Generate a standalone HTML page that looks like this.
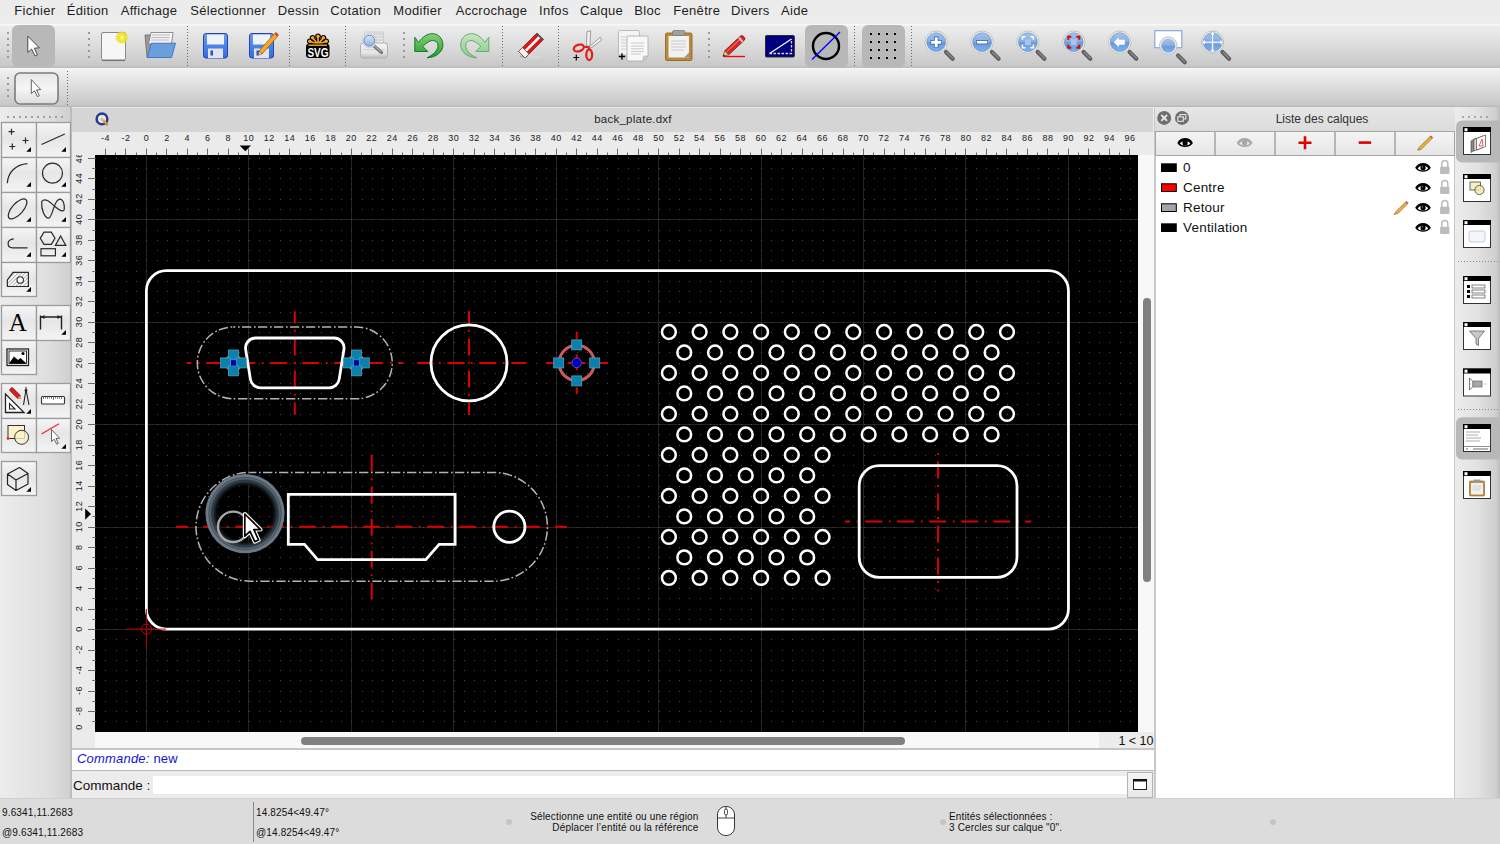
<!DOCTYPE html><html><head><meta charset="utf-8"><style>*{margin:0;padding:0;box-sizing:border-box}
html,body{width:1500px;height:844px;overflow:hidden;background:#ececec;font-family:"Liberation Sans",sans-serif;position:relative}
div,span,svg{position:absolute}
#menubar{left:0;top:0;width:1500px;height:23px;background:#ececec}
.mi{top:3px;font-size:13px;letter-spacing:0.3px;color:#1e1e1e;white-space:nowrap;line-height:15px}
#tb1{left:0;top:23px;width:1500px;height:45px;background:linear-gradient(#e2e2e2 0,#fafafa 2.5%,#ececec 8%,#dadada 55%,#c8c8c8 95%,#b9b9b9 100%)}
#tb2{left:0;top:68px;width:1500px;height:39px;background:linear-gradient(#f8f8f8 0,#efefef 8%,#dadada 55%,#c8c8c8 94%,#b6b6b6 100%)}
#leftpanel{left:0;top:107px;width:71px;height:691px;background:linear-gradient(90deg,#ececec,#dedede 70%,#cfcfcf)}
#mdititle{left:72px;top:108px;width:1081px;height:24px;background:#d5d5d5}
#mditext{left:72px;top:111.5px;width:1122px;text-align:center;font-size:11.5px;letter-spacing:0.25px;color:#262626;line-height:14px}
#mdiicon{left:95px;top:111.5px;width:14px;height:14px}
#rulertop{left:72px;top:131.5px;width:1081px;height:24px;background:#ebebeb}
#rulerleft{left:72px;top:155px;width:23px;height:593px;background:#ebebeb}
#leftedge{left:70px;top:107px;width:2px;height:691px;background:#bdbdbd}
svg text{font-family:"Liberation Sans",sans-serif;font-size:9px;letter-spacing:0.5px;fill:#222}
</style></head><body><div id="menubar"><span class="mi" style="left:14.3px">Fichier</span><span class="mi" style="left:66.7px">Édition</span><span class="mi" style="left:120.7px">Affichage</span><span class="mi" style="left:190.3px">Sélectionner</span><span class="mi" style="left:277.7px">Dessin</span><span class="mi" style="left:330.3px">Cotation</span><span class="mi" style="left:393.3px">Modifier</span><span class="mi" style="left:455.7px">Accrochage</span><span class="mi" style="left:539px">Infos</span><span class="mi" style="left:580px">Calque</span><span class="mi" style="left:634.3px">Bloc</span><span class="mi" style="left:673.3px">Fenêtre</span><span class="mi" style="left:731px">Divers</span><span class="mi" style="left:781px">Aide</span></div><div id="tb1"></div>
<svg width="1500" height="45" viewBox="0 23 1500 45" style="left:0;top:23px">
<defs>
<linearGradient id="flop" x1="0" y1="0" x2="0" y2="1"><stop offset="0" stop-color="#6aa0f0"/><stop offset="1" stop-color="#2f6be0"/></linearGradient>
<linearGradient id="lens" x1="0" y1="0" x2="0" y2="1"><stop offset="0" stop-color="#a6c2ea"/><stop offset="0.48" stop-color="#86aee4"/><stop offset="0.52" stop-color="#6a9ada"/><stop offset="1" stop-color="#7ab2ee"/></linearGradient>
<radialGradient id="glow" cx="0.5" cy="0.5" r="0.5"><stop offset="0" stop-color="#fffde0"/><stop offset="0.35" stop-color="#f2e830"/><stop offset="0.75" stop-color="#eee020" stop-opacity="0.8"/><stop offset="1" stop-color="#eee020" stop-opacity="0"/></radialGradient>
<linearGradient id="grn" x1="0" y1="0" x2="0" y2="1"><stop offset="0" stop-color="#8ad07a"/><stop offset="1" stop-color="#1f9a2a"/></linearGradient>
<linearGradient id="grnl" x1="0" y1="0" x2="0" y2="1"><stop offset="0" stop-color="#c8e8c0"/><stop offset="1" stop-color="#86c88a"/></linearGradient>
<g id="mag"><path d="M7.8 7.8L14.5 14.5" stroke="#5e5e5e" stroke-width="4.2" stroke-linecap="round"/><path d="M8.5 8L14.5 14" stroke="#8a8a8a" stroke-width="1.3" stroke-linecap="round"/></g>
</defs>
<!-- handles -->
<g fill="#9a9a9a"><rect x="7" y="32" width="2" height="2"/><rect x="7" y="38" width="2" height="2"/><rect x="7" y="44" width="2" height="2"/><rect x="7" y="50" width="2" height="2"/><rect x="7" y="56" width="2" height="2"/>
<rect x="88" y="32" width="2" height="2"/><rect x="88" y="38" width="2" height="2"/><rect x="88" y="44" width="2" height="2"/><rect x="88" y="50" width="2" height="2"/><rect x="88" y="56" width="2" height="2"/>
<rect x="403" y="32" width="2" height="2"/><rect x="403" y="38" width="2" height="2"/><rect x="403" y="44" width="2" height="2"/><rect x="403" y="50" width="2" height="2"/><rect x="403" y="56" width="2" height="2"/>
<rect x="708" y="32" width="2" height="2"/><rect x="708" y="38" width="2" height="2"/><rect x="708" y="44" width="2" height="2"/><rect x="708" y="50" width="2" height="2"/><rect x="708" y="56" width="2" height="2"/></g>
<!-- separators -->
<g stroke="#6a6a6a" stroke-width="1" stroke-dasharray="1 2"><path d="M187.5 26V66M289.5 26V66M345.5 26V66M502.5 26V66M558.5 26V66M854.5 26V66M911.5 26V66"/></g>
<!-- selected pointer -->
<rect x="12" y="25" width="43" height="42" rx="6" fill="#b8b8b8"/>
<path d="M27.8 36.2V52.5L31.6 49L35 56L37.4 54.9L34.3 48.2L39.3 47.8Z" fill="#fff" stroke="#3a3a3a" stroke-width="0.9" stroke-linejoin="round"/>
<!-- new -->
<rect x="101.5" y="32.5" width="24" height="27.5" rx="1.5" fill="#f6f6f6" stroke="#8a8a8a" stroke-width="1"/>
<path d="M102 60.5H125" stroke="#777" stroke-width="1.2"/>
<circle cx="121.8" cy="37.5" r="6.8" fill="url(#glow)"/>
<!-- open -->
<path d="M145 35H153L154 34.5V57H147Z" fill="#9a9a9a" stroke="#666" stroke-width="0.8"/>
<path d="M151 32.5H173L171.5 44H148.5Z" fill="#f4f4f4" stroke="#777" stroke-width="0.8"/>
<path d="M152 35H170M151.5 37.5H169.5M151 40H169" stroke="#b8b8b8" stroke-width="1.2"/>
<path d="M151.3 43.2H175.5L171.6 57.5H147.2Z" fill="#6b9ede" stroke="#3f72c0" stroke-width="0.9"/>
<!-- save -->
<rect x="203.5" y="33.5" width="24" height="24.5" rx="2.5" fill="url(#flop)" stroke="#2840b0" stroke-width="1"/>
<rect x="207" y="34.5" width="17" height="10" fill="#eef2fa"/>
<rect x="208" y="48.5" width="15" height="9.5" fill="#e0e4ee"/>
<rect x="210.5" y="50.5" width="2.5" height="5" fill="#2a50c0"/>
<!-- save as -->
<rect x="249.5" y="33.5" width="24" height="24.5" rx="2.5" fill="url(#flop)" stroke="#2840b0" stroke-width="1"/>
<rect x="253" y="34.5" width="17" height="10" fill="#eef2fa"/>
<rect x="254" y="48.5" width="15" height="9.5" fill="#e0e4ee"/>
<rect x="256.5" y="50.5" width="2.5" height="5" fill="#2a50c0"/>
<path d="M259 51L274.5 33.5L277.5 36.5L262 54Z" fill="#f5a830" stroke="#a05a10" stroke-width="0.8"/>
<path d="M259 51L262 54L258.3 55Z" fill="#f0d8a0" stroke="#704010" stroke-width="0.5"/>
<path d="M274.5 33.5L276 32L279 35L277.5 36.5Z" fill="#e04040"/>
<!-- svg -->
<g stroke="#000" stroke-linecap="round" fill="none"><path d="M318 44.5V37M318 44.5L313 38.3M318 44.5L323 38.3M318 44.5L310.5 41.5M318 44.5L325.5 41.5" stroke-width="3.6"/></g>
<g fill="#000"><circle cx="318" cy="36.2" r="2.8"/><circle cx="312.6" cy="37.8" r="2.8"/><circle cx="323.4" cy="37.8" r="2.8"/><circle cx="309.8" cy="41.2" r="2.8"/><circle cx="326.2" cy="41.2" r="2.8"/></g>
<g stroke="#f9a928" stroke-linecap="round" fill="none"><path d="M318 44.5V37M318 44.5L313 38.3M318 44.5L323 38.3M318 44.5L310.5 41.5M318 44.5L325.5 41.5" stroke-width="1.6"/></g>
<g fill="#f9a928"><circle cx="318" cy="36.2" r="1.7"/><circle cx="312.6" cy="37.8" r="1.7"/><circle cx="323.4" cy="37.8" r="1.7"/><circle cx="309.8" cy="41.2" r="1.7"/><circle cx="326.2" cy="41.2" r="1.7"/></g>
<rect x="306" y="43.5" width="23.5" height="14.5" rx="3.5" fill="#000"/>
<path d="M308.5 45.2H327" stroke="#f9a928" stroke-width="1.4"/>
<text x="318" y="56.6" text-anchor="middle" transform="translate(318 0) scale(0.8 1) translate(-318 0)" style="font-size:12.5px;font-weight:bold;letter-spacing:0;fill:#fff;font-family:'Liberation Sans',sans-serif">SVG</text>
<!-- print preview -->
<defs><linearGradient id="prb" x1="0" y1="0" x2="0" y2="1"><stop offset="0" stop-color="#f6f6f6"/><stop offset="0.7" stop-color="#e2e2e2"/><stop offset="1" stop-color="#bcbcbc"/></linearGradient>
<linearGradient id="glass" x1="0" y1="0" x2="0" y2="1"><stop offset="0" stop-color="#dce8f6"/><stop offset="1" stop-color="#8ab2e2"/></linearGradient></defs>
<rect x="364.5" y="32" width="19" height="13" rx="1" fill="#e6e6e6" stroke="#c8c8c8" stroke-width="0.8"/>
<path d="M383 34H373M383 37H375M383 40H376" stroke="#c8c8c8" stroke-width="1"/>
<path d="M360.5 46Q360.5 43 363.5 43H384.5Q387.5 43 387.5 46V55Q387.5 58 384.5 58H363.5Q360.5 58 360.5 55Z" fill="url(#prb)" stroke="#b0b0b0" stroke-width="1"/>
<path d="M363 49.5H385" stroke="#cfcfcf" stroke-width="0.8"/>
<path d="M373.5 45.5L381.5 52.5" stroke="#777" stroke-width="3.4" stroke-linecap="round"/>
<path d="M374 45.5L381 51.8" stroke="#c0c0c0" stroke-width="1" stroke-linecap="round"/>
<circle cx="369.3" cy="40.7" r="7" fill="#ececec" stroke="#c4c4c4" stroke-width="0.8"/>
<circle cx="369.3" cy="40.7" r="5.4" fill="url(#glass)" stroke="#5a8ad0" stroke-width="1"/>
<!-- undo -->
<path d="M414.8 37.3L418.5 42.4C423 36.5 427.5 33.7 432.1 33.7C438.5 33.7 442.9 38.5 442.9 45C442.9 52 436 57.5 427 57.8C433 55 438 50.5 438 45.6C438 42.5 435.5 40.5 432.7 40.5C429.5 40.5 426.5 43 422.7 46.4L427.8 51.5L414.8 51.5Z" fill="url(#grn)" stroke="#137a22" stroke-width="1" stroke-linejoin="round"/>
<!-- redo -->
<path d="M414.8 37.3L418.5 42.4C423 36.5 427.5 33.7 432.1 33.7C438.5 33.7 442.9 38.5 442.9 45C442.9 52 436 57.5 427 57.8C433 55 438 50.5 438 45.6C438 42.5 435.5 40.5 432.7 40.5C429.5 40.5 426.5 43 422.7 46.4L427.8 51.5L414.8 51.5Z" transform="translate(903.6 0) scale(-1 1)" fill="url(#grnl)" stroke="#6aa878" stroke-width="1" stroke-linejoin="round"/>
<!-- eraser -->
<ellipse cx="531" cy="57" rx="11" ry="1.6" fill="#d8d8d8"/>
<ellipse cx="524" cy="56.5" rx="4" ry="1.3" fill="#888" fill-opacity="0.6"/>
<g transform="translate(531 45.5) rotate(-45)">
<rect x="-13" y="-4.6" width="26" height="9.2" fill="#d41a1a" stroke="#8a1010" stroke-width="0.7"/>
<rect x="-7.5" y="-1.3" width="19.5" height="2.6" fill="#fafafa"/>
<rect x="-13" y="-4.6" width="5.5" height="9.2" fill="#f2f2f2" stroke="#7a4040" stroke-width="0.7"/>
<rect x="11.8" y="-4.6" width="1.6" height="9.2" fill="#555"/>
</g>
<!-- scissors -->
<path d="M586.6 46.5L586.9 31.8L590.6 30.8L589.9 46.5Z" fill="#f2f2f2" stroke="#8a8a8a" stroke-width="0.8"/>
<path d="M589.2 46.8L600.3 37.3L601.5 40.2L590.8 48Z" fill="#f2f2f2" stroke="#8a8a8a" stroke-width="0.8"/>
<ellipse cx="578.8" cy="48" rx="5.2" ry="3.2" fill="none" stroke="#e02020" stroke-width="2.3" transform="rotate(-18 578.8 48)"/>
<ellipse cx="589.2" cy="54.8" rx="2.9" ry="5.3" fill="none" stroke="#e02020" stroke-width="2.3"/>
<path d="M583.5 47L588.5 46.8L589 50" stroke="#e02020" stroke-width="2.2" fill="none"/>
<path d="M573.3 57.5H579.3M576.3 54.5V60.5" stroke="#000" stroke-width="1.2"/>
<!-- copy -->
<path d="M618.5 31.5Q618.5 30.5 619.5 30.5H638.5Q639.5 30.5 639.5 31.5V54Q639.5 55 638.5 55H619.5Q618.5 55 618.5 54Z" fill="#f4f4f4" stroke="#b0b0b0" stroke-width="0.8"/>
<path d="M621 37H630M621 40H630M621 43H630M621 46H630M621 49H630" stroke="#c8c8c8" stroke-width="0.8"/>
<path d="M627 37Q627 36 628 36H647Q648 36 648 37V56L643 61H628Q627 61 627 60Z" fill="#f8f8f8" stroke="#a8a8a8" stroke-width="0.8"/>
<path d="M643 61V57.5Q643 56 644.5 56H648Z" fill="#d0d0d0" stroke="#a8a8a8" stroke-width="0.6"/>
<path d="M631 43H644M631 46H644M631 48.8H644M631 51.5H644M631 54H641" stroke="#c4c4c4" stroke-width="0.9"/>
<path d="M618.8 56.5H625.2M622 53.3V59.7" stroke="#000" stroke-width="1.3"/>
<!-- paste -->
<rect x="665.5" y="33" width="26.5" height="27.5" rx="1.5" fill="#b88a3a" stroke="#8a6020" stroke-width="0.8"/>
<rect x="668.5" y="36" width="20.5" height="21.5" fill="#f2f2f2"/>
<path d="M671 41H686M671 44H686M671 47H686M671 50H684" stroke="#c0c0c0" stroke-width="0.8"/>
<path d="M684 57.5L689 52.5V57.5Z" fill="#999"/>
<rect x="672.5" y="30.5" width="12.5" height="5" rx="1.5" fill="#a0a0a0" stroke="#777" stroke-width="0.7"/>
<!-- pencil red line -->
<path d="M723 56.5H745" stroke="#ff0000" stroke-width="1.3"/>
<g transform="translate(734 46) rotate(-43)">
<path d="M-10 -2.8H11.5Q13.5 -2.8 13.5 0Q13.5 2.8 11.5 2.8H-10Z" fill="#e02424" stroke="#7a1a10" stroke-width="0.8"/>
<path d="M-9 -0.8H11" stroke="#f07070" stroke-width="1"/>
<rect x="8.2" y="-2.8" width="2" height="5.6" fill="#e8c8c8"/>
<path d="M-10 -2.8L-15 0L-10 2.8Z" fill="#f0c890" stroke="#7a4a10" stroke-width="0.7"/>
<path d="M-13.2 -1L-15 0L-13.2 1Z" fill="#222"/>
</g>
<!-- blue triangle -->
<rect x="765.5" y="35.5" width="28.8" height="21.5" rx="1" fill="#00007e" stroke="#2a2a2a" stroke-width="1"/>
<path d="M769.5 53.5L791.5 39" stroke="#fff" stroke-width="1.2"/>
<path d="M769.5 53.5H791.5V39" fill="none" stroke="#d8d8e8" stroke-width="1.3" stroke-dasharray="2.5 1.5"/>
<!-- selected circle with line -->
<rect x="805" y="25" width="43" height="42.5" rx="6" fill="#b8b8b8"/>
<circle cx="826" cy="46" r="13" fill="none" stroke="#000" stroke-width="2.4"/>
<path d="M812 59.5L840 32" stroke="#0000ff" stroke-width="1.3"/>
<!-- grid selected -->
<rect x="862" y="25" width="43" height="42.5" rx="6" fill="#b8b8b8"/>
<g fill="#000"><rect x="870" y="33" width="2" height="2"/><rect x="878" y="33" width="2" height="2"/><rect x="886" y="33" width="2" height="2"/><rect x="894" y="33" width="2" height="2"/>
<rect x="870" y="41" width="2" height="2"/><rect x="878" y="41" width="2" height="2"/><rect x="886" y="41" width="2" height="2"/><rect x="894" y="41" width="2" height="2"/>
<rect x="870" y="49" width="2" height="2"/><rect x="878" y="49" width="2" height="2"/><rect x="886" y="49" width="2" height="2"/><rect x="894" y="49" width="2" height="2"/>
<rect x="870" y="57" width="2" height="2"/><rect x="878" y="57" width="2" height="2"/><rect x="886" y="57" width="2" height="2"/><rect x="894" y="57" width="2" height="2"/></g>
<!-- zoom icons -->
<g transform="translate(936.2 42.2)"><use href="#mag" transform="translate(2 2)"/><circle r="11.2" fill="#f0f0ea" stroke="#c4c4b8" stroke-width="1"/><circle r="9.4" fill="url(#lens)" stroke="#5a88c8" stroke-width="0.6"/><path d="M-5.6 0H5.6M0 -5.6V5.6" stroke="#2a58a8" stroke-width="4.4"/><path d="M-5 0H5M0 -5V5" stroke="#fff" stroke-width="2.9"/></g>
<g transform="translate(982.1 42.2)"><use href="#mag" transform="translate(2 2)"/><circle r="11.2" fill="#f0f0ea" stroke="#c4c4b8" stroke-width="1"/><circle r="9.4" fill="url(#lens)" stroke="#5a88c8" stroke-width="0.6"/><path d="M-5.8 0H5.8" stroke="#2a58a8" stroke-width="4.2"/><path d="M-5.2 0H5.2" stroke="#fff" stroke-width="2.7"/></g>
<g transform="translate(1027.9 42.2)"><use href="#mag" transform="translate(2 2)"/><circle r="11.2" fill="#f0f0ea" stroke="#c4c4b8" stroke-width="1"/><circle r="9.4" fill="url(#lens)" stroke="#5a88c8" stroke-width="0.6"/><rect x="-3" y="-3" width="6" height="6" fill="#a8c4ec"/><path d="M-5.5 -2.5V-5.5H-2.5M2.5 -5.5H5.5V-2.5M5.5 2.5V5.5H2.5M-2.5 5.5H-5.5V2.5" stroke="#fff" stroke-width="1.5" fill="none"/></g>
<g transform="translate(1073.8 42.2)"><use href="#mag" transform="translate(2 2)"/><circle r="11.2" fill="#f0f0ea" stroke="#c4c4b8" stroke-width="1"/><circle r="9.4" fill="url(#lens)" stroke="#5a88c8" stroke-width="0.6"/><rect x="-3" y="-3" width="6" height="6" fill="#a8c4ec"/><path d="M-5.5 -2.5V-5.5H-2.5M2.5 -5.5H5.5V-2.5M5.5 2.5V5.5H2.5M-2.5 5.5H-5.5V2.5" stroke="#e00000" stroke-width="2" fill="none"/></g>
<g transform="translate(1119.8 42.2)"><use href="#mag" transform="translate(2 2)"/><circle r="11.2" fill="#f0f0ea" stroke="#c4c4b8" stroke-width="1"/><circle r="9.4" fill="url(#lens)" stroke="#5a88c8" stroke-width="0.6"/><path d="M-6 0L-1 -5V-2.5H5V2.5H-1V5Z" fill="#fff"/></g>
<g transform="translate(1168.3 45.7)"><rect x="-13.5" y="-15" width="27" height="17" fill="#fff" stroke="#88a8d8" stroke-width="1.2"/><use href="#mag" transform="translate(2 2)"/><circle r="8.8" fill="#e8e8e8" stroke="#c0c0c0" stroke-width="1"/><circle r="7" fill="url(#lens)"/></g>
<g transform="translate(1212.6 42.2)"><use href="#mag" transform="translate(2 2)"/><circle r="11.2" fill="#f0f0ea" stroke="#c4c4b8" stroke-width="1"/><circle r="9.4" fill="url(#lens)" stroke="#5a88c8" stroke-width="0.6"/><path d="M0 -11L3 -7.5H1V-1H7.5V-3L11 0L7.5 3V1H1V7.5H3L0 11L-3 7.5H-1V1H-7.5V3L-11 0L-7.5 -3V-1H-1V-7.5H-3Z" fill="#fff" stroke="#6a9ad8" stroke-width="0.6"/></g>
</svg>
<div id="tb2"></div>
<svg width="80" height="39" viewBox="0 68 80 39" style="left:0;top:68px">
<g fill="#9a9a9a"><rect x="7" y="77" width="2" height="2"/><rect x="7" y="83" width="2" height="2"/><rect x="7" y="89" width="2" height="2"/><rect x="7" y="95" width="2" height="2"/></g>
<defs><linearGradient id="b2g" x1="0" y1="0" x2="0" y2="1"><stop offset="0" stop-color="#e6e6e6"/><stop offset="0.5" stop-color="#f6f6f6"/><stop offset="1" stop-color="#dcdcdc"/></linearGradient></defs>
<rect x="15" y="73" width="43" height="31" rx="5" fill="url(#b2g)" stroke="#7c7c7c" stroke-width="1.6"/>
<path d="M31.3 79.6V93.6L34.5 90.7L37.4 96.6L39.3 95.7L36.5 89.9L40.8 89.6Z" fill="#fff" stroke="#4a4a4a" stroke-width="0.85" stroke-linejoin="round"/>
<path d="M67.5 71V106" stroke="#6a6a6a" stroke-width="1" stroke-dasharray="1 2"/>
</svg>
<div id="leftpanel"></div><div id="leftedge"></div>
<svg width="71" height="691" viewBox="0 107 71 691" style="left:0;top:107px">
<defs>
<linearGradient id="btg" x1="0" y1="0" x2="0" y2="1"><stop offset="0" stop-color="#f6f6f6"/><stop offset="0.45" stop-color="#e6e6e6"/><stop offset="1" stop-color="#f4f4f4"/></linearGradient>
<path id="tri" d="M31 151.8H26.3L31 147.1Z" fill="#000"/>
</defs>
<g fill="#a0a0a0"><rect x="7" y="116" width="2" height="2"/><rect x="13" y="116" width="2" height="2"/><rect x="19" y="116" width="2" height="2"/><rect x="25" y="116" width="2" height="2"/><rect x="31" y="116" width="2" height="2"/><rect x="37" y="116" width="2" height="2"/><rect x="43" y="116" width="2" height="2"/><rect x="49" y="116" width="2" height="2"/><rect x="55" y="116" width="2" height="2"/><rect x="61" y="116" width="2" height="2"/></g>
<g fill="url(#btg)" stroke="#9c9c9c" stroke-width="1.3">
<rect x="1.5" y="122.5" width="35" height="35"/><rect x="36.5" y="122.5" width="34" height="35"/>
<rect x="1.5" y="157.5" width="35" height="35"/><rect x="36.5" y="157.5" width="34" height="35"/>
<rect x="1.5" y="192.5" width="35" height="35"/><rect x="36.5" y="192.5" width="34" height="35"/>
<rect x="1.5" y="227.5" width="35" height="35"/><rect x="36.5" y="227.5" width="34" height="35"/>
<rect x="1.5" y="262.5" width="35" height="34"/>
<rect x="1.5" y="305.5" width="35" height="35"/><rect x="36.5" y="305.5" width="34" height="35"/>
<rect x="1.5" y="340.5" width="35" height="34"/>
<rect x="1.5" y="383.5" width="35" height="35"/><rect x="36.5" y="383.5" width="34" height="35"/>
<rect x="1.5" y="418.5" width="35" height="34"/><rect x="36.5" y="418.5" width="34" height="34"/>
<rect x="1.5" y="461.5" width="35" height="34"/>
</g>
<g fill="none" stroke="#2a2a2a" stroke-width="1.2">
<path d="M8.5 131.7H14.5M11.5 128.7V134.7M22.5 140.5H28.5M25.5 137.5V143.5M9.3 146.5H15.3M12.3 143.5V149.5"/>
<path d="M41.5 144.5L64.8 134"/>
<path d="M7.3 183.2C8 172 16 164.5 27.4 163.6"/>
<circle cx="52.5" cy="173.2" r="10"/>
<ellipse cx="17.6" cy="208.9" rx="12.5" ry="5.5" transform="rotate(-48 17.6 208.9)"/>
<path d="M41.7 201.5C41 210 45 218 48.5 218.2C52 218 53 206 57 201C60 197.5 64.5 199 64.3 209C64 213 59 210 55.5 207C50 202 45 197 41.7 201.5Z"/>
<path d="M13.7 238.9C10 239.2 8.1 241.5 8.1 243.5C8.1 246.5 9.8 247.8 12.5 247.8H27.6"/>
<path d="M44 232.2H51.3L55 238.2L51.3 244.4H44L40.3 238.2Z"/>
<path d="M55.4 245.4H65.8L60.6 235.9Z"/>
<rect x="41" y="248.7" width="14.4" height="7.1"/>
</g>
<use href="#tri"/><use href="#tri" x="35"/><use href="#tri" y="35"/><use href="#tri" x="35" y="35"/><use href="#tri" y="70"/><use href="#tri" x="35" y="70"/><use href="#tri" y="105"/><use href="#tri" x="35" y="105"/><use href="#tri" y="140"/>
<!-- hatch -->
<defs><pattern id="hp" width="2.6" height="2.6" patternUnits="userSpaceOnUse" patternTransform="rotate(45)"><rect width="2.6" height="2.6" fill="#fff"/><path d="M0 0V2.6" stroke="#555" stroke-width="0.9"/></pattern></defs>
<path d="M7.4 286.5V280L13 272.4H28.4V286.5Z" fill="url(#hp)" stroke="#2a2a2a" stroke-width="1.2"/>
<circle cx="20.2" cy="280" r="3.2" fill="#fff" stroke="#2a2a2a" stroke-width="1.1"/>
<!-- A -->
<text x="18" y="331" text-anchor="middle" style="font-family:'Liberation Serif',serif;font-size:25px;fill:#000">A</text>
<!-- dimension -->
<path d="M40.5 315.5V329.5M61.5 315.5V329.5M41 317H61" stroke="#222" stroke-width="1.4" fill="none"/>
<path d="M41 317L44.5 315V319ZM61 317L57.5 315V319Z" fill="#222"/>
<use href="#tri" x="35" y="183"/>
<!-- image -->
<rect x="7" y="349" width="21.5" height="16.5" fill="#fff" stroke="#222" stroke-width="1.3"/>
<path d="M9 363.5L14 356.5L18 360L20.5 358L26.5 363.5Z" fill="#000"/>
<rect x="9" y="351" width="17.5" height="12.5" fill="none" stroke="#000" stroke-width="0.8"/>
<circle cx="23" cy="353.5" r="1.6" fill="#000"/>
<!-- snap tools -->
<path d="M5.5 394V412.5H24Z" fill="#fff" stroke="#222" stroke-width="1.3" stroke-linejoin="miter"/>
<path d="M9.5 403.5V409H15Z" fill="none" stroke="#222" stroke-width="1.1"/>
<g transform="translate(15.5 393.5) rotate(45)"><path d="M-6 -2H5L7 0L5 2H-6Q-7 2 -7 0Q-7 -2 -6 -2Z" fill="#d82020" stroke="#7a1010" stroke-width="0.6"/><path d="M5 -2L7.5 0L5 2Z" fill="#e8c090"/></g>
<path d="M26 389.5L23.5 405M26 389.5L29 405" stroke="#222" stroke-width="1.1" fill="none"/>
<circle cx="26" cy="390.5" r="1.4" fill="#222"/><path d="M26 387V389" stroke="#222" stroke-width="1"/>
<use href="#tri" y="262"/>
<!-- ruler -->
<rect x="41.5" y="396.5" width="23" height="7.5" rx="1" fill="#fff" stroke="#333" stroke-width="1.1"/>
<path d="M43.5 397V399M45.5 397V398.5M47.5 397V399M49.5 397V398.5M51.5 397V399M53.5 397V400M55.5 397V398.5M57.5 397V399M59.5 397V398.5M61.5 397V399" stroke="#444" stroke-width="0.7"/>
<!-- rect circle -->
<rect x="8" y="425.5" width="16.5" height="13" fill="#fcf2cc" stroke="#333" stroke-width="1"/>
<circle cx="21.6" cy="437.3" r="7" fill="#fbf0c8" fill-opacity="0.8" stroke="#333" stroke-width="1"/>
<circle cx="8" cy="438.5" r="1.4" fill="#f03030"/>
<!-- red line cursor -->
<path d="M41.5 434L59 423.7" stroke="#ff2020" stroke-width="1.2"/>
<path d="M51.5 429.5V441.5L54.2 439.2L56.7 444.2L58.3 443.4L56 438.5L59.6 438.3Z" fill="#fff" stroke="#555" stroke-width="0.9" stroke-linejoin="round"/>
<use href="#tri" x="35" y="297"/>
<!-- 3d box -->
<path d="M7.5 474V484.5L16 490.5L28 484V473.5L19.5 467.5Z M7.5 474L16 480L28 473.5 M16 480V490.5" fill="none" stroke="#222" stroke-width="1.2" stroke-linejoin="round"/>
<use href="#tri" y="340"/>
</svg>
<div id="mdititle"></div><div id="mdiicon"><svg width="14" height="14" viewBox="95 111.5 14 14" style="left:0;top:0"><circle cx="102" cy="118.4" r="5.3" fill="#f4f4f4" stroke="#2a3c8c" stroke-width="2.6"/><path d="M99 118.5H105M102 115.5V121.5" stroke="#999" stroke-width="0.6"/><path d="M103 119.5L106.5 123.5" stroke="#f0a020" stroke-width="2.2"/><path d="M106.3 123.3L107.6 124.6" stroke="#e06060" stroke-width="2"/></svg>
</div><div id="mditext">back_plate.dxf</div><div id="rulertop"></div><div id="rulerleft"></div><svg id="rtop" width="1081" height="24" viewBox="72 131.5 1081 24" style="position:absolute;left:72px;top:131.5px"><path d="M105.5 148V155M115.5 152V155M125.5 148V155M136.5 152V155M146.5 148V155M156.5 152V155M166.5 148V155M177.5 152V155M187.5 148V155M197.5 152V155M207.5 148V155M218.5 152V155M228.5 148V155M238.5 152V155M248.5 148V155M259.5 152V155M269.5 148V155M279.5 152V155M289.5 148V155M300.5 152V155M310.5 148V155M320.5 152V155M330.5 148V155M341.5 152V155M351.5 148V155M361.5 152V155M371.5 148V155M382.5 152V155M392.5 148V155M402.5 152V155M412.5 148V155M423.5 152V155M433.5 148V155M443.5 152V155M453.5 148V155M463.5 152V155M474.5 148V155M484.5 152V155M494.5 148V155M504.5 152V155M515.5 148V155M525.5 152V155M535.5 148V155M545.5 152V155M556.5 148V155M566.5 152V155M576.5 148V155M586.5 152V155M597.5 148V155M607.5 152V155M617.5 148V155M627.5 152V155M638.5 148V155M648.5 152V155M658.5 148V155M668.5 152V155M679.5 148V155M689.5 152V155M699.5 148V155M709.5 152V155M720.5 148V155M730.5 152V155M740.5 148V155M750.5 152V155M761.5 148V155M771.5 152V155M781.5 148V155M791.5 152V155M802.5 148V155M812.5 152V155M822.5 148V155M832.5 152V155M843.5 148V155M853.5 152V155M863.5 148V155M873.5 152V155M884.5 148V155M894.5 152V155M904.5 148V155M914.5 152V155M925.5 148V155M935.5 152V155M945.5 148V155M955.5 152V155M965.5 148V155M976.5 152V155M986.5 148V155M996.5 152V155M1006.5 148V155M1017.5 152V155M1027.5 148V155M1037.5 152V155M1047.5 148V155M1058.5 152V155M1068.5 148V155M1078.5 152V155M1088.5 148V155M1099.5 152V155M1109.5 148V155M1119.5 152V155M1129.5 148V155" stroke="#6b6b6b" stroke-width="1"/><text x="105.42" y="140.8" text-anchor="middle">-4</text><text x="125.91" y="140.8" text-anchor="middle">-2</text><text x="146.4" y="140.8" text-anchor="middle">0</text><text x="166.89" y="140.8" text-anchor="middle">2</text><text x="187.38" y="140.8" text-anchor="middle">4</text><text x="207.87" y="140.8" text-anchor="middle">6</text><text x="228.36" y="140.8" text-anchor="middle">8</text><text x="248.85" y="140.8" text-anchor="middle">10</text><text x="269.34" y="140.8" text-anchor="middle">12</text><text x="289.83" y="140.8" text-anchor="middle">14</text><text x="310.32" y="140.8" text-anchor="middle">16</text><text x="330.81" y="140.8" text-anchor="middle">18</text><text x="351.3" y="140.8" text-anchor="middle">20</text><text x="371.79" y="140.8" text-anchor="middle">22</text><text x="392.28" y="140.8" text-anchor="middle">24</text><text x="412.77" y="140.8" text-anchor="middle">26</text><text x="433.26" y="140.8" text-anchor="middle">28</text><text x="453.75" y="140.8" text-anchor="middle">30</text><text x="474.24" y="140.8" text-anchor="middle">32</text><text x="494.73" y="140.8" text-anchor="middle">34</text><text x="515.22" y="140.8" text-anchor="middle">36</text><text x="535.71" y="140.8" text-anchor="middle">38</text><text x="556.2" y="140.8" text-anchor="middle">40</text><text x="576.69" y="140.8" text-anchor="middle">42</text><text x="597.18" y="140.8" text-anchor="middle">44</text><text x="617.67" y="140.8" text-anchor="middle">46</text><text x="638.16" y="140.8" text-anchor="middle">48</text><text x="658.65" y="140.8" text-anchor="middle">50</text><text x="679.14" y="140.8" text-anchor="middle">52</text><text x="699.63" y="140.8" text-anchor="middle">54</text><text x="720.12" y="140.8" text-anchor="middle">56</text><text x="740.61" y="140.8" text-anchor="middle">58</text><text x="761.1" y="140.8" text-anchor="middle">60</text><text x="781.59" y="140.8" text-anchor="middle">62</text><text x="802.08" y="140.8" text-anchor="middle">64</text><text x="822.57" y="140.8" text-anchor="middle">66</text><text x="843.06" y="140.8" text-anchor="middle">68</text><text x="863.55" y="140.8" text-anchor="middle">70</text><text x="884.04" y="140.8" text-anchor="middle">72</text><text x="904.53" y="140.8" text-anchor="middle">74</text><text x="925.02" y="140.8" text-anchor="middle">76</text><text x="945.51" y="140.8" text-anchor="middle">78</text><text x="966" y="140.8" text-anchor="middle">80</text><text x="986.49" y="140.8" text-anchor="middle">82</text><text x="1006.98" y="140.8" text-anchor="middle">84</text><text x="1027.47" y="140.8" text-anchor="middle">86</text><text x="1047.96" y="140.8" text-anchor="middle">88</text><text x="1068.45" y="140.8" text-anchor="middle">90</text><text x="1088.94" y="140.8" text-anchor="middle">92</text><text x="1109.43" y="140.8" text-anchor="middle">94</text><text x="1129.92" y="140.8" text-anchor="middle">96</text><path d="M239.6 145H251L245.3 150.8Z" fill="#000"/></svg><svg id="rleft" width="23" height="576" viewBox="72 155 23 576" style="position:absolute;left:72px;top:155px"><path d="M92.3 721.5H95M88 711.5H95M92.3 701.5H95M88 691.5H95M92.3 680.5H95M88 670.5H95M92.3 660.5H95M88 650.5H95M92.3 639.5H95M88 629.5H95M92.3 619.5H95M88 609.5H95M92.3 598.5H95M88 588.5H95M92.3 578.5H95M88 568.5H95M92.3 557.5H95M88 547.5H95M92.3 537.5H95M88 527.5H95M92.3 516.5H95M88 506.5H95M92.3 496.5H95M88 486.5H95M92.3 475.5H95M88 465.5H95M92.3 455.5H95M88 445.5H95M92.3 434.5H95M88 424.5H95M92.3 414.5H95M88 404.5H95M92.3 393.5H95M88 383.5H95M92.3 373.5H95M88 363.5H95M92.3 352.5H95M88 342.5H95M92.3 332.5H95M88 322.5H95M92.3 312.5H95M88 301.5H95M92.3 291.5H95M88 281.5H95M92.3 271.5H95M88 260.5H95M92.3 250.5H95M88 240.5H95M92.3 230.5H95M88 219.5H95M92.3 209.5H95M88 199.5H95M92.3 189.5H95M88 178.5H95M92.3 168.5H95M88 158.5H95" stroke="#6b6b6b" stroke-width="1"/><text transform="translate(81.6 731.55) rotate(-90)" text-anchor="middle">-10</text><text transform="translate(81.6 711.06) rotate(-90)" text-anchor="middle">-8</text><text transform="translate(81.6 690.57) rotate(-90)" text-anchor="middle">-6</text><text transform="translate(81.6 670.08) rotate(-90)" text-anchor="middle">-4</text><text transform="translate(81.6 649.59) rotate(-90)" text-anchor="middle">-2</text><text transform="translate(81.6 629.1) rotate(-90)" text-anchor="middle">0</text><text transform="translate(81.6 608.61) rotate(-90)" text-anchor="middle">2</text><text transform="translate(81.6 588.12) rotate(-90)" text-anchor="middle">4</text><text transform="translate(81.6 567.63) rotate(-90)" text-anchor="middle">6</text><text transform="translate(81.6 547.14) rotate(-90)" text-anchor="middle">8</text><text transform="translate(81.6 526.65) rotate(-90)" text-anchor="middle">10</text><text transform="translate(81.6 506.16) rotate(-90)" text-anchor="middle">12</text><text transform="translate(81.6 485.67) rotate(-90)" text-anchor="middle">14</text><text transform="translate(81.6 465.18) rotate(-90)" text-anchor="middle">16</text><text transform="translate(81.6 444.69) rotate(-90)" text-anchor="middle">18</text><text transform="translate(81.6 424.2) rotate(-90)" text-anchor="middle">20</text><text transform="translate(81.6 403.71) rotate(-90)" text-anchor="middle">22</text><text transform="translate(81.6 383.22) rotate(-90)" text-anchor="middle">24</text><text transform="translate(81.6 362.73) rotate(-90)" text-anchor="middle">26</text><text transform="translate(81.6 342.24) rotate(-90)" text-anchor="middle">28</text><text transform="translate(81.6 321.75) rotate(-90)" text-anchor="middle">30</text><text transform="translate(81.6 301.26) rotate(-90)" text-anchor="middle">32</text><text transform="translate(81.6 280.77) rotate(-90)" text-anchor="middle">34</text><text transform="translate(81.6 260.28) rotate(-90)" text-anchor="middle">36</text><text transform="translate(81.6 239.79) rotate(-90)" text-anchor="middle">38</text><text transform="translate(81.6 219.3) rotate(-90)" text-anchor="middle">40</text><text transform="translate(81.6 198.81) rotate(-90)" text-anchor="middle">42</text><text transform="translate(81.6 178.32) rotate(-90)" text-anchor="middle">44</text><text transform="translate(81.6 157.83) rotate(-90)" text-anchor="middle">46</text><path d="M85.2 508.4V519.8L91 514.1Z" fill="#000"/></svg><svg id="canvas" width="1043" height="577" viewBox="95 155 1043 577" style="position:absolute;left:95px;top:155px;background:#000"><path d="M146.5 155V732M248.5 155V732M351.5 155V732M453.5 155V732M556.5 155V732M658.5 155V732M761.5 155V732M863.5 155V732M965.5 155V732M1068.5 155V732M95 629.5H1138M95 527.5H1138M95 424.5H1138M95 322.5H1138M95 219.5H1138" stroke="#242424" stroke-width="1"/><defs><path id="dr" d="M95 0H1138" stroke="#4a4a4a" stroke-width="1" stroke-dasharray="0 0 1 9 1 10 1 9 1 9 1 9 1 10 1 9 1 9 1 9 1 10 1 9 1 9 1 9 1 10 1 9 1 9 1 9 1 10 1 9 1 9 1 9 1 10 1 9 1 9 1 9 1 10 1 9 1 9 1 9 1 10 1 9 1 9 1 9 1 10 1 9 1 9 1 9 1 9 1 10 1 9 1 9 1 9 1 10 1 9 1 9 1 9 1 10 1 9 1 9 1 9 1 10 1 9 1 9 1 9 1 10 1 9 1 9 1 9 1 10 1 9 1 9 1 9 1 10 1 9 1 9 1 9 1 10 1 9 1 9 1 9 1 10 1 9 1 9 1 9 1 10 1 9 1 9 1 9 1 10 1 9 1 9 1 9 1 10 1 9 1 9 1 9 1 9 1 10 1 9 1 9 1 9 1 10 1 9 1 9 1 9 1 10 1 9 1 9 1 9 1 10 1 9 1 2000"/></defs><use href="#dr" y="721.5"/><use href="#dr" y="711.5"/><use href="#dr" y="701.5"/><use href="#dr" y="691.5"/><use href="#dr" y="680.5"/><use href="#dr" y="670.5"/><use href="#dr" y="660.5"/><use href="#dr" y="650.5"/><use href="#dr" y="639.5"/><use href="#dr" y="629.5"/><use href="#dr" y="619.5"/><use href="#dr" y="609.5"/><use href="#dr" y="598.5"/><use href="#dr" y="588.5"/><use href="#dr" y="578.5"/><use href="#dr" y="568.5"/><use href="#dr" y="557.5"/><use href="#dr" y="547.5"/><use href="#dr" y="537.5"/><use href="#dr" y="527.5"/><use href="#dr" y="516.5"/><use href="#dr" y="506.5"/><use href="#dr" y="496.5"/><use href="#dr" y="486.5"/><use href="#dr" y="475.5"/><use href="#dr" y="465.5"/><use href="#dr" y="455.5"/><use href="#dr" y="445.5"/><use href="#dr" y="434.5"/><use href="#dr" y="424.5"/><use href="#dr" y="414.5"/><use href="#dr" y="404.5"/><use href="#dr" y="393.5"/><use href="#dr" y="383.5"/><use href="#dr" y="373.5"/><use href="#dr" y="363.5"/><use href="#dr" y="352.5"/><use href="#dr" y="342.5"/><use href="#dr" y="332.5"/><use href="#dr" y="322.5"/><use href="#dr" y="312.5"/><use href="#dr" y="301.5"/><use href="#dr" y="291.5"/><use href="#dr" y="281.5"/><use href="#dr" y="271.5"/><use href="#dr" y="260.5"/><use href="#dr" y="250.5"/><use href="#dr" y="240.5"/><use href="#dr" y="230.5"/><use href="#dr" y="219.5"/><use href="#dr" y="209.5"/><use href="#dr" y="199.5"/><use href="#dr" y="189.5"/><use href="#dr" y="178.5"/><use href="#dr" y="168.5"/><use href="#dr" y="158.5"/><path d="M166.4 270.53H1048.45A20 20 0 0 1 1068.45 290.53V609.1A20 20 0 0 1 1048.45 629.1H166.4A20 20 0 0 1 146.4 609.1V290.53A20 20 0 0 1 166.4 270.53Z" fill="none" stroke="#fff" stroke-width="2.8"/><path d="M186.6 362.9L403 362.9" stroke="#dc0000" stroke-width="2" stroke-dasharray="17 6.6 1.8 6.6" stroke-dashoffset="12.4"/><path d="M294.8 311.2L294.8 414.7" stroke="#dc0000" stroke-width="2" stroke-dasharray="17 6.6 1.8 6.6" stroke-dashoffset="4.8"/><path d="M233.2 327H356.4A35.9 35.9 0 0 1 356.4 398.8H233.2A35.9 35.9 0 0 1 233.2 327Z" fill="none" stroke="#b4b4b4" stroke-width="1.5" stroke-dasharray="9.3 2.7 1.7 2.3" stroke-dashoffset="7.2"/><path d="M245.66 349.59A10 10 0 0 1 255.53 338L334.07 338A10 10 0 0 1 343.94 349.59L339.15 379.39A10 10 0 0 1 329.28 387.8L260.32 387.8A10 10 0 0 1 250.45 379.39Z" fill="none" stroke="#fff" stroke-width="2.8"/><path d="M417.1 362.9L526.3 362.9" stroke="#dc0000" stroke-width="2" stroke-dasharray="17 6.6 1.8 6.6" stroke-dashoffset="1.8"/><path d="M469 311.1L469 414.9" stroke="#dc0000" stroke-width="2" stroke-dasharray="17 6.6 1.8 6.6" stroke-dashoffset="4.7"/><circle cx="469" cy="362.9" r="38" fill="none" stroke="#fff" stroke-width="2.8"/><path d="M545.9 362.9H553.4M568.1 362.9H571.7M581.9 362.9H585.4M600.1 362.9H608.1M576.7 331.7V339.2M576.7 354.3V357.9M576.7 366.8V370.3M576.7 387.2V393.9" stroke="#dc0000" stroke-width="2"/><circle cx="576.7" cy="362.9" r="17.4" fill="none" stroke="#cc5c5c" stroke-width="2.6"/><g fill="none" stroke="#fff" stroke-width="2.5"><circle cx="668.89" cy="332" r="6.9"/><circle cx="699.63" cy="332" r="6.9"/><circle cx="730.36" cy="332" r="6.9"/><circle cx="761.1" cy="332" r="6.9"/><circle cx="791.83" cy="332" r="6.9"/><circle cx="822.57" cy="332" r="6.9"/><circle cx="853.3" cy="332" r="6.9"/><circle cx="884.04" cy="332" r="6.9"/><circle cx="914.77" cy="332" r="6.9"/><circle cx="945.51" cy="332" r="6.9"/><circle cx="976.24" cy="332" r="6.9"/><circle cx="1006.98" cy="332" r="6.9"/><circle cx="684.26" cy="352.49" r="6.9"/><circle cx="715" cy="352.49" r="6.9"/><circle cx="745.73" cy="352.49" r="6.9"/><circle cx="776.47" cy="352.49" r="6.9"/><circle cx="807.2" cy="352.49" r="6.9"/><circle cx="837.94" cy="352.49" r="6.9"/><circle cx="868.67" cy="352.49" r="6.9"/><circle cx="899.41" cy="352.49" r="6.9"/><circle cx="930.14" cy="352.49" r="6.9"/><circle cx="960.88" cy="352.49" r="6.9"/><circle cx="991.61" cy="352.49" r="6.9"/><circle cx="668.89" cy="372.98" r="6.9"/><circle cx="699.63" cy="372.98" r="6.9"/><circle cx="730.36" cy="372.98" r="6.9"/><circle cx="761.1" cy="372.98" r="6.9"/><circle cx="791.83" cy="372.98" r="6.9"/><circle cx="822.57" cy="372.98" r="6.9"/><circle cx="853.3" cy="372.98" r="6.9"/><circle cx="884.04" cy="372.98" r="6.9"/><circle cx="914.77" cy="372.98" r="6.9"/><circle cx="945.51" cy="372.98" r="6.9"/><circle cx="976.24" cy="372.98" r="6.9"/><circle cx="1006.98" cy="372.98" r="6.9"/><circle cx="684.26" cy="393.47" r="6.9"/><circle cx="715" cy="393.47" r="6.9"/><circle cx="745.73" cy="393.47" r="6.9"/><circle cx="776.47" cy="393.47" r="6.9"/><circle cx="807.2" cy="393.47" r="6.9"/><circle cx="837.94" cy="393.47" r="6.9"/><circle cx="868.67" cy="393.47" r="6.9"/><circle cx="899.41" cy="393.47" r="6.9"/><circle cx="930.14" cy="393.47" r="6.9"/><circle cx="960.88" cy="393.47" r="6.9"/><circle cx="991.61" cy="393.47" r="6.9"/><circle cx="668.89" cy="413.96" r="6.9"/><circle cx="699.63" cy="413.96" r="6.9"/><circle cx="730.36" cy="413.96" r="6.9"/><circle cx="761.1" cy="413.96" r="6.9"/><circle cx="791.83" cy="413.96" r="6.9"/><circle cx="822.57" cy="413.96" r="6.9"/><circle cx="853.3" cy="413.96" r="6.9"/><circle cx="884.04" cy="413.96" r="6.9"/><circle cx="914.77" cy="413.96" r="6.9"/><circle cx="945.51" cy="413.96" r="6.9"/><circle cx="976.24" cy="413.96" r="6.9"/><circle cx="1006.98" cy="413.96" r="6.9"/><circle cx="684.26" cy="434.45" r="6.9"/><circle cx="715" cy="434.45" r="6.9"/><circle cx="745.73" cy="434.45" r="6.9"/><circle cx="776.47" cy="434.45" r="6.9"/><circle cx="807.2" cy="434.45" r="6.9"/><circle cx="837.94" cy="434.45" r="6.9"/><circle cx="868.67" cy="434.45" r="6.9"/><circle cx="899.41" cy="434.45" r="6.9"/><circle cx="930.14" cy="434.45" r="6.9"/><circle cx="960.88" cy="434.45" r="6.9"/><circle cx="991.61" cy="434.45" r="6.9"/><circle cx="668.89" cy="454.94" r="6.9"/><circle cx="699.63" cy="454.94" r="6.9"/><circle cx="730.36" cy="454.94" r="6.9"/><circle cx="761.1" cy="454.94" r="6.9"/><circle cx="791.83" cy="454.94" r="6.9"/><circle cx="822.57" cy="454.94" r="6.9"/><circle cx="684.26" cy="475.43" r="6.9"/><circle cx="715" cy="475.43" r="6.9"/><circle cx="745.73" cy="475.43" r="6.9"/><circle cx="776.47" cy="475.43" r="6.9"/><circle cx="807.2" cy="475.43" r="6.9"/><circle cx="668.89" cy="495.92" r="6.9"/><circle cx="699.63" cy="495.92" r="6.9"/><circle cx="730.36" cy="495.92" r="6.9"/><circle cx="761.1" cy="495.92" r="6.9"/><circle cx="791.83" cy="495.92" r="6.9"/><circle cx="822.57" cy="495.92" r="6.9"/><circle cx="684.26" cy="516.4" r="6.9"/><circle cx="715" cy="516.4" r="6.9"/><circle cx="745.73" cy="516.4" r="6.9"/><circle cx="776.47" cy="516.4" r="6.9"/><circle cx="807.2" cy="516.4" r="6.9"/><circle cx="668.89" cy="536.89" r="6.9"/><circle cx="699.63" cy="536.89" r="6.9"/><circle cx="730.36" cy="536.89" r="6.9"/><circle cx="761.1" cy="536.89" r="6.9"/><circle cx="791.83" cy="536.89" r="6.9"/><circle cx="822.57" cy="536.89" r="6.9"/><circle cx="684.26" cy="557.38" r="6.9"/><circle cx="715" cy="557.38" r="6.9"/><circle cx="745.73" cy="557.38" r="6.9"/><circle cx="776.47" cy="557.38" r="6.9"/><circle cx="807.2" cy="557.38" r="6.9"/><circle cx="668.89" cy="577.88" r="6.9"/><circle cx="699.63" cy="577.88" r="6.9"/><circle cx="730.36" cy="577.88" r="6.9"/><circle cx="761.1" cy="577.88" r="6.9"/><circle cx="791.83" cy="577.88" r="6.9"/><circle cx="822.57" cy="577.88" r="6.9"/></g><path d="M844.8 521.6L1031.3 521.6" stroke="#dc0000" stroke-width="2" stroke-dasharray="17 6.6 1.8 6.6" stroke-dashoffset="11.6"/><path d="M938.1 453.2L938.1 591.2" stroke="#dc0000" stroke-width="2" stroke-dasharray="17 6.6 1.8 6.6" stroke-dashoffset="23.7"/><rect x="859.2" y="465.7" width="157.8" height="111.6" rx="20" ry="20" fill="none" stroke="#fff" stroke-width="2.8"/><path d="M175.9 526.7L566.9 526.7" stroke="#dc0000" stroke-width="2" stroke-dasharray="17 6.6 1.8 6.6" stroke-dashoffset="4.7"/><path d="M371.7 454.8L371.7 599.4" stroke="#dc0000" stroke-width="2" stroke-dasharray="17 6.6 1.8 6.6" stroke-dashoffset="0"/><path d="M250.4 472.4H493A54.4 54.4 0 0 1 493 581.2H250.4A54.4 54.4 0 0 1 250.4 472.4Z" fill="none" stroke="#b4b4b4" stroke-width="1.5" stroke-dasharray="9.3 2.7 1.7 2.3" stroke-dashoffset="3.4"/><path d="M288.3 494.3H455.1V544.3H439.1L425.8 559.7H317.6L304.5 544.3H288.3Z" fill="none" stroke="#fff" stroke-width="2.8" stroke-linejoin="miter"/><circle cx="509.4" cy="526.7" r="15.6" fill="none" stroke="#fff" stroke-width="2.8"/><circle cx="233.4" cy="362.9" r="7.9" fill="none" stroke="#cc5c5c" stroke-width="2.2"/><rect x="228.4" y="350" width="10" height="10" fill="#0a80ac" stroke="#4aa0c4" stroke-width="0.8"/><rect x="220.5" y="357.9" width="10" height="10" fill="#0a80ac" stroke="#4aa0c4" stroke-width="0.8"/><rect x="236.3" y="357.9" width="10" height="10" fill="#0a80ac" stroke="#4aa0c4" stroke-width="0.8"/><rect x="228.4" y="365.8" width="10" height="10" fill="#0a80ac" stroke="#4aa0c4" stroke-width="0.8"/><rect x="231" y="360.4" width="5" height="5" fill="#0000c0"/><circle cx="356.4" cy="362.9" r="7.9" fill="none" stroke="#cc5c5c" stroke-width="2.2"/><rect x="351.4" y="350" width="10" height="10" fill="#0a80ac" stroke="#4aa0c4" stroke-width="0.8"/><rect x="343.5" y="357.9" width="10" height="10" fill="#0a80ac" stroke="#4aa0c4" stroke-width="0.8"/><rect x="359.3" y="357.9" width="10" height="10" fill="#0a80ac" stroke="#4aa0c4" stroke-width="0.8"/><rect x="351.4" y="365.8" width="10" height="10" fill="#0a80ac" stroke="#4aa0c4" stroke-width="0.8"/><rect x="354" y="360.4" width="5" height="5" fill="#0000c0"/><circle cx="576.7" cy="362.9" r="18" fill="none" stroke="#cc5c5c" stroke-width="2.2"/><rect x="571.7" y="339.9" width="10" height="10" fill="#0a80ac" stroke="#4aa0c4" stroke-width="0.8"/><rect x="553.7" y="357.9" width="10" height="10" fill="#0a80ac" stroke="#4aa0c4" stroke-width="0.8"/><rect x="589.7" y="357.9" width="10" height="10" fill="#0a80ac" stroke="#4aa0c4" stroke-width="0.8"/><rect x="571.7" y="375.9" width="10" height="10" fill="#0a80ac" stroke="#4aa0c4" stroke-width="0.8"/><circle cx="576.7" cy="362.9" r="4.8" fill="#0000b8" stroke="#5a6ad0" stroke-width="0.8"/><g stroke="#c00000" stroke-width="1" fill="none"><circle cx="146.4" cy="629.1" r="5"/><path d="M126 629.1H166M146.4 609V649"/></g><defs><radialGradient id="rg" cx="245" cy="513.6" r="39.7" gradientUnits="userSpaceOnUse"><stop offset="0.66" stop-color="#000" stop-opacity="0"/><stop offset="0.74" stop-color="#141a20" stop-opacity="0.7"/><stop offset="0.82" stop-color="#34404c"/><stop offset="0.88" stop-color="#56646f"/><stop offset="0.94" stop-color="#6c7a87"/><stop offset="0.985" stop-color="#6a7886"/><stop offset="1" stop-color="#4a5560"/></radialGradient></defs><circle cx="245" cy="513.6" r="39.7" fill="url(#rg)"/><g fill="none" stroke="#000" stroke-opacity="0.35" stroke-width="0.8"><circle cx="245" cy="513.6" r="36.2"/><circle cx="245" cy="513.6" r="33.4"/></g><circle cx="233.2" cy="526.8" r="15.2" fill="none" stroke="#a8a8a8" stroke-width="2.4"/><path d="M244.8 514V536.2L250 531.3L254.8 541.6L258.6 540L253.9 529.6L260.6 529.6Z" fill="#fff" stroke="#fff" stroke-width="4" stroke-linejoin="round"/><path d="M244.8 514V536.2L250 531.3L254.8 541.6L258.6 540L253.9 529.6L260.6 529.6Z" fill="#fff" stroke="#000" stroke-width="1.7" stroke-linejoin="round"/></svg><div style="left:1138px;top:131.5px;width:15px;height:24px;background:#ebebeb"></div>
<div style="left:1138px;top:155px;width:15.5px;height:577px;background:#f8f8f8"></div>
<div style="left:1143.3px;top:298px;width:8.2px;height:283.5px;background:#808080;border-radius:4px"></div>
<div style="left:95px;top:732px;width:1004px;height:16px;background:#f8f8f8"></div>
<div style="left:301px;top:737px;width:603.5px;height:8px;background:#808080;border-radius:4px"></div>
<div style="left:1099px;top:732px;width:54.5px;height:16px;background:#ececec"></div>
<div style="left:1099px;top:734px;width:54.5px;text-align:right;font-size:12.5px;line-height:15px;color:#111">1 &lt; 10</div>
<div style="left:72px;top:748px;width:1081.5px;height:2px;background:#c6c6c6"></div>
<div style="left:72px;top:750px;width:1081.5px;height:20.5px;background:#fff;border-bottom:1px solid #b8b8b8"></div>
<div style="left:77px;top:751px;font-size:13px;letter-spacing:0.2px;line-height:15px;color:#1414d4;white-space:nowrap"><i>Commande:</i> new</div>
<div style="left:72px;top:770.5px;width:1081.5px;height:27.5px;background:#ececec"></div>
<div style="left:152.5px;top:776px;width:975px;height:18px;background:#fff"></div>
<div style="left:73px;top:777.8px;font-size:13.5px;line-height:16px;color:#111;white-space:nowrap">Commande :</div>
<div style="left:1127px;top:772px;width:26px;height:25.5px;background:linear-gradient(#f4f4f4,#e8e8e8);border:1px solid #b4b4b4"></div>
<svg width="20" height="14" viewBox="0 0 20 14" style="left:1130px;top:777px"><rect x="3.5" y="2.5" width="13" height="10" fill="#fff" stroke="#222" stroke-width="1"/><rect x="3" y="2" width="14" height="2.5" fill="#111"/></svg>
<div style="left:1153.5px;top:108px;width:1.5px;height:690px;background:#c8c8c8"></div>
<div style="left:1155px;top:107px;width:300px;height:24px;background:linear-gradient(#e6e6e6,#dcdcdc)"></div>
<div style="left:1155px;top:112px;width:334px;text-align:center;font-size:12px;line-height:14px;color:#333">Liste des calques</div>
<svg width="40" height="20" viewBox="1155 108 40 20" style="left:1155px;top:108px">
<circle cx="1164.2" cy="117.9" r="7" fill="#6e6e6e"/><path d="M1161.3 115L1167.1 120.8M1167.1 115L1161.3 120.8" stroke="#e8e8e8" stroke-width="1.8"/>
<circle cx="1182" cy="117.9" r="7" fill="#6e6e6e"/><rect x="1177.8" y="116.8" width="5.5" height="4.5" fill="none" stroke="#e8e8e8" stroke-width="1.1"/><path d="M1180 116.5V114.5H1185.8V119H1183.5" fill="none" stroke="#e8e8e8" stroke-width="1.1"/>
</svg>
<div style="left:1155px;top:130.5px;width:299.5px;height:25.5px;background:linear-gradient(#f4f4f4,#e6e6e6);border:1.3px solid #a4a4a4"></div>
<svg width="300" height="26" viewBox="1155 130 300 26" style="left:1155px;top:130px">
<path d="M1215 131V155.5M1275 131V155.5M1335 131V155.5M1395 131V155.5" stroke="#a4a4a4" stroke-width="1.5"/>
<g transform="translate(1185.1 142.6)"><path d="M-7.8 0.3C-5 -6.2 5 -6.2 7.8 0.3C5 5.6 -5 5.6 -7.8 0.3Z" fill="#000"/><path d="M-5.2 1C-3.5 -2.6 3.5 -2.6 5.2 1C3.5 3.6 -3.5 3.6 -5.2 1Z" fill="#fff"/><circle cy="0.3" r="2.6" fill="#000"/></g>
<g transform="translate(1244.6 142.6)"><path d="M-7.8 0.3C-5 -6.2 5 -6.2 7.8 0.3C5 5.6 -5 5.6 -7.8 0.3Z" fill="#a8a8a8"/><path d="M-5.2 1C-3.5 -2.6 3.5 -2.6 5.2 1C3.5 3.6 -3.5 3.6 -5.2 1Z" fill="#ececec"/><circle cy="0.3" r="2.6" fill="#a8a8a8"/></g>
<path d="M1305 136.3V149.3M1298.5 142.8H1311.5" stroke="#e00000" stroke-width="2.6"/>
<path d="M1358.7 142.6H1371.1" stroke="#e00000" stroke-width="2.6"/>
<path d="M1419 147.5L1430 136.5L1432 138.5L1421 149.5L1417.6 150.2Z" fill="#e8b040" stroke="#8a6010" stroke-width="0.6"/><path d="M1430 136.5L1431 135.5L1433 137.5L1432 138.5Z" fill="#e04040"/>
</svg>
<div style="left:1155px;top:156px;width:299.5px;height:642px;background:#fff;border-left:1px solid #c8c8c8;border-right:1px solid #c8c8c8"></div>
<svg width="300" height="90" viewBox="1155 156 300 90" style="left:1155px;top:156px">
<defs>
<g id="eye"><path d="M-7.8 0.3C-5 -6.2 5 -6.2 7.8 0.3C5 5.6 -5 5.6 -7.8 0.3Z" fill="#000"/><path d="M-5.2 1C-3.5 -2.6 3.5 -2.6 5.2 1C3.5 3.6 -3.5 3.6 -5.2 1Z" fill="#fff"/><circle cy="0.3" r="2.6" fill="#000"/><circle cx="-0.6" cy="-0.6" r="0.7" fill="#888"/></g>
<g id="lock"><path d="M-3 -1V-4.5A3 3 0 0 1 3 -4.5V-1" fill="none" stroke="#bcbcbc" stroke-width="1.5"/><rect x="-4.7" y="-1.3" width="9.4" height="7.3" rx="1" fill="#bcbcbc"/></g>
</defs>
<rect x="1161" y="163.3" width="15.8" height="8.7" fill="#000"/>
<rect x="1161.5" y="183.8" width="14.8" height="7.7" fill="#f00" stroke="#000" stroke-width="1"/>
<rect x="1161.5" y="203.8" width="14.8" height="7.7" fill="#a4a4a8" stroke="#000" stroke-width="1"/>
<rect x="1161" y="223.3" width="15.8" height="8.7" fill="#000"/>
<use href="#eye" x="1423" y="167.5"/><use href="#eye" x="1423" y="187.5"/><use href="#eye" x="1423" y="207.5"/><use href="#eye" x="1423" y="227.5"/>
<use href="#lock" x="1444.8" y="168"/><use href="#lock" x="1444.8" y="188"/><use href="#lock" x="1444.8" y="208"/><use href="#lock" x="1444.8" y="228"/>
<path d="M1396 211.5L1405.5 202L1407.5 204L1398 213.5L1394 214.5Z" fill="#e8b040" stroke="#8a6010" stroke-width="0.6"/><path d="M1405.5 202L1406.5 201L1408.5 203L1407.5 204Z" fill="#e04040"/>
</svg>
<div style="left:1183px;top:159.5px;font-size:13.5px;letter-spacing:0.2px;line-height:15px;color:#111">0</div>
<div style="left:1183px;top:179.5px;font-size:13.5px;letter-spacing:0.2px;line-height:15px;color:#111">Centre</div>
<div style="left:1183px;top:199.5px;font-size:13.5px;letter-spacing:0.2px;line-height:15px;color:#111">Retour</div>
<div style="left:1183px;top:219.5px;font-size:13.5px;letter-spacing:0.2px;line-height:15px;color:#111">Ventilation</div>
<!-- right dock -->
<div style="left:1455px;top:107px;width:45px;height:691px;background:linear-gradient(90deg,#ececec,#e2e2e2 50%,#cfcfcf 90%,#bdbdbd)"></div>
<svg width="45" height="400" viewBox="1455 107 45 400" style="left:1455px;top:107px">
<g fill="#a8a8a8"><rect x="1462" y="116" width="2" height="2"/><rect x="1468" y="116" width="2" height="2"/><rect x="1474" y="116" width="2" height="2"/><rect x="1480" y="116" width="2" height="2"/><rect x="1486" y="116" width="2" height="2"/></g>
<path d="M1458 261.5H1500M1458 409.5H1500" stroke="#888" stroke-width="1" stroke-dasharray="1 2"/>
<rect x="1456" y="120.4" width="50" height="42.2" rx="6" fill="#b8b8b8"/>
<rect x="1456" y="417.3" width="50" height="42.2" rx="6" fill="#b8b8b8"/>
<defs><g id="win"><rect x="0.5" y="0.5" width="27" height="27" fill="#fff" stroke="#333" stroke-width="1"/><rect x="0" y="0" width="28" height="5" fill="#000"/><rect x="1.5" y="1.2" width="3" height="3" fill="#fff"/></g></defs>
<use href="#win" x="1463" y="127"/><use href="#win" x="1463" y="174"/><use href="#win" x="1463" y="220"/><use href="#win" x="1463" y="276"/><use href="#win" x="1463" y="322"/><use href="#win" x="1463" y="368.5"/><use href="#win" x="1463" y="424"/><use href="#win" x="1463" y="471"/>
<!-- icon1 layers -->
<path d="M1471 141L1476 138V149.5L1471 152.5Z" fill="#888" stroke="#444" stroke-width="0.6"/><path d="M1474 139.5L1483 136V147.5L1474 151Z" fill="#ddd" stroke="#444" stroke-width="0.6"/><path d="M1476.5 138.5L1485.5 135V146.5L1476.5 150Z" fill="#fff" stroke="#444" stroke-width="0.7"/><path d="M1479 146L1482 139L1483 146Z" fill="none" stroke="#e03030" stroke-width="0.8"/>
<!-- icon2 block -->
<rect x="1470" y="182" width="10.5" height="8" fill="#f8f0c0" stroke="#444" stroke-width="0.8"/><circle cx="1479.5" cy="190" r="4.6" fill="#f4e8b0" fill-opacity="0.85" stroke="#444" stroke-width="0.8"/>
<!-- icon3 -->
<rect x="1469" y="231" width="16" height="11" rx="2" fill="#f4f6fa" stroke="#b0c4e0" stroke-width="0.8"/>
<!-- icon4 list -->
<rect x="1467" y="285" width="3" height="3" fill="#000"/><rect x="1472" y="285" width="13" height="3" fill="#fff" stroke="#333" stroke-width="0.6"/>
<rect x="1467" y="290" width="3" height="3" fill="#000"/><rect x="1472" y="290" width="13" height="3" fill="#fff" stroke="#333" stroke-width="0.6"/>
<rect x="1467" y="295" width="3" height="3" fill="#000"/><rect x="1472" y="295" width="13" height="3" fill="#fff" stroke="#333" stroke-width="0.6"/>
<!-- icon5 funnel -->
<path d="M1469.5 331H1484.5L1478.5 338.5V345.5L1476 344V338.5Z" fill="#c8c8c8" stroke="#555" stroke-width="0.7"/>
<!-- icon6 screw -->
<path d="M1469.5 378V390L1473 386.5V381.5Z" fill="#fff" stroke="#444" stroke-width="0.7"/><rect x="1473" y="381" width="9" height="6" fill="#aaa" stroke="#555" stroke-width="0.6"/><path d="M1467 384H1487" stroke="#f08080" stroke-width="0.6" stroke-dasharray="1.5 1"/>
<!-- icon7 command -->
<path d="M1466 432H1480M1466 435H1478M1466 438H1481M1466 441H1480" stroke="#888" stroke-width="0.7"/><path d="M1463.5 446.5H1490.5" stroke="#444" stroke-width="0.6"/><path d="M1466 449H1468M1473 449H1488" stroke="#444" stroke-width="0.8"/>
<!-- icon8 clipboard -->
<rect x="1469.5" y="481" width="15" height="15" rx="1" fill="#c08e40" stroke="#8a6020" stroke-width="0.6"/><rect x="1471" y="483" width="12" height="11.5" fill="#f2f2f2"/><rect x="1473.5" y="479.5" width="7" height="3" fill="#999"/><path d="M1472.5 486H1481.5M1472.5 488H1481.5M1472.5 490H1480" stroke="#bbb" stroke-width="0.6"/>
</svg>
<div style="left:0;top:797.5px;width:1500px;height:46.5px;background:#dcdcdc;border-top:1px solid #cfcfcf"></div>
<div style="left:2px;top:807px;font-size:10px;letter-spacing:0.15px;line-height:12px;color:#111;white-space:nowrap">9.6341,11.2683</div>
<div style="left:2px;top:827px;font-size:10px;letter-spacing:0.15px;line-height:12px;color:#111;white-space:nowrap">@9.6341,11.2683</div>
<div style="left:253px;top:802px;width:1px;height:40px;background:#8a8a8a"></div>
<div style="left:256px;top:807px;font-size:10px;letter-spacing:0.15px;line-height:12px;color:#111;white-space:nowrap">14.8254&lt;49.47°</div>
<div style="left:256px;top:827px;font-size:10px;letter-spacing:0.15px;line-height:12px;color:#111;white-space:nowrap">@14.8254&lt;49.47°</div>
<div style="left:506px;top:819px;width:6px;height:6px;border-radius:3px;background:#c4c4c4"></div>
<div style="left:400px;top:811px;width:298.5px;text-align:right;font-size:10px;letter-spacing:0.15px;line-height:12px;color:#111;white-space:nowrap">Sélectionne une entité ou une région</div>
<div style="left:400px;top:822px;width:298.5px;text-align:right;font-size:10px;letter-spacing:0.15px;line-height:12px;color:#111;white-space:nowrap">Déplacer l’entité ou la référence</div>
<svg width="20" height="32" viewBox="0 0 20 32" style="left:716px;top:805px"><path d="M10 1.5C5 1.5 1.5 5 1.5 10V22C1.5 27 5 30.5 10 30.5C15 30.5 18.5 27 18.5 22V10C18.5 5 15 1.5 10 1.5Z" fill="#fff" stroke="#333" stroke-width="1"/><path d="M1.5 13H18.5M10 1.5V13" stroke="#333" stroke-width="0.9"/><rect x="8.5" y="4" width="3" height="6" rx="1.5" fill="#fff" stroke="#333" stroke-width="0.9"/></svg>
<div style="left:940px;top:819px;width:6px;height:6px;border-radius:3px;background:#c4c4c4"></div>
<div style="left:949px;top:811px;font-size:10px;letter-spacing:0.15px;line-height:12px;color:#111;white-space:nowrap">Entités sélectionnées :</div>
<div style="left:949px;top:822px;font-size:10px;letter-spacing:0.15px;line-height:12px;color:#111;white-space:nowrap">3 Cercles sur calque "0".</div>
<div style="left:1269.5px;top:819px;width:6px;height:6px;border-radius:3px;background:#c4c4c4"></div>
</body></html>
